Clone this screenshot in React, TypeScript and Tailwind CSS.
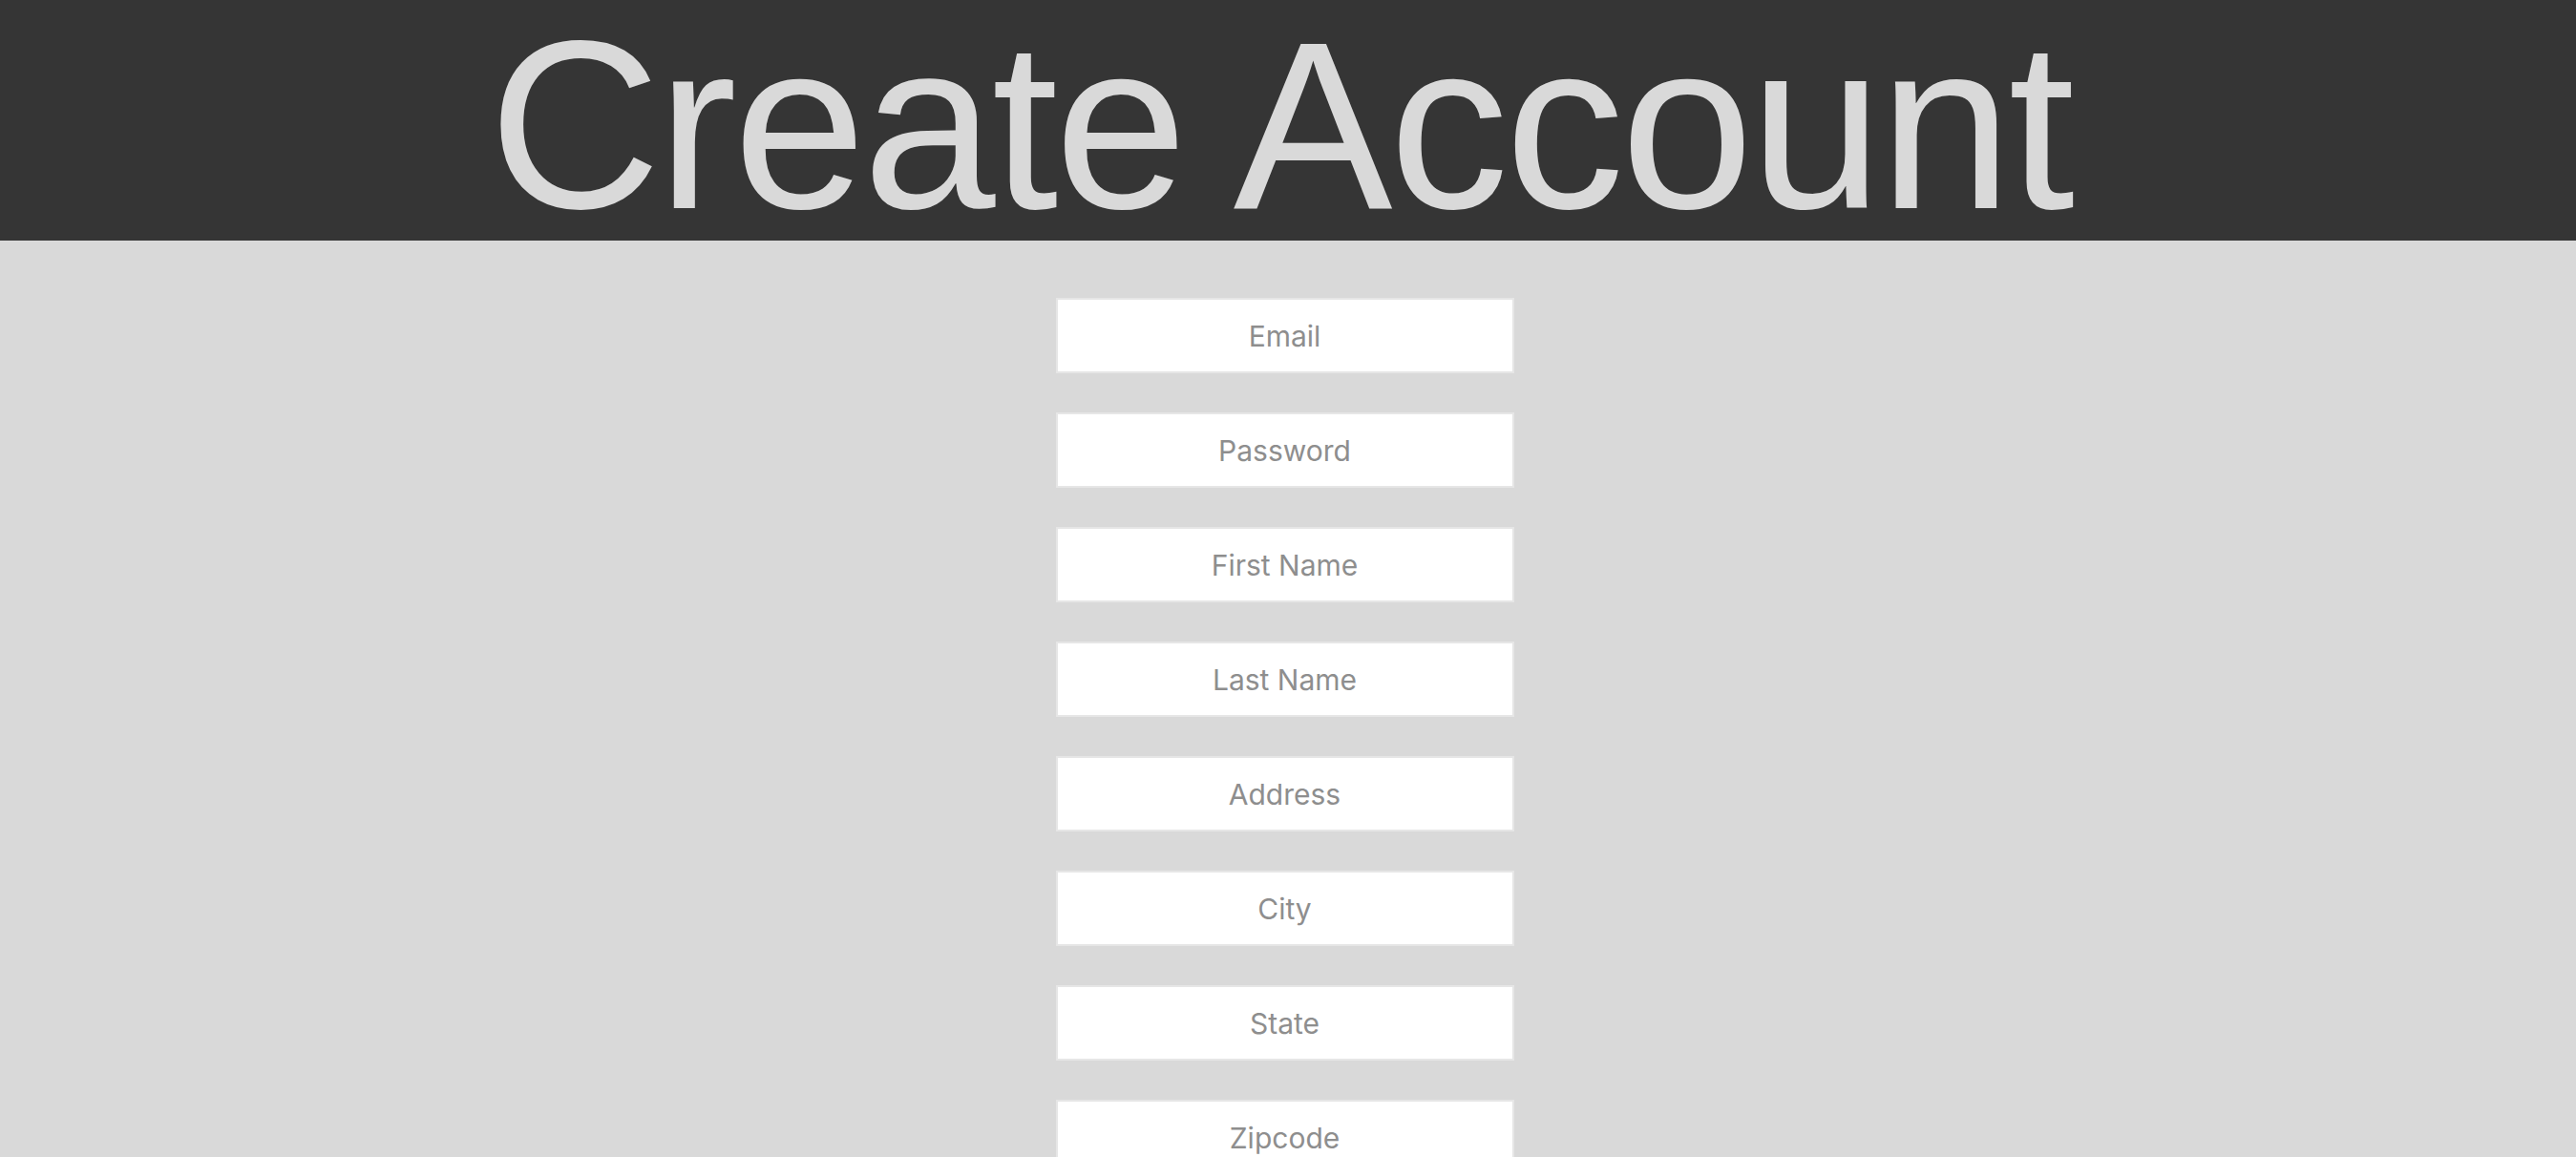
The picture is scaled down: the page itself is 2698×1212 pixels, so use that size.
const fields = [
  "Email",
  "Password",
  "First Name",
  "Last Name",
  "Address",
  "City",
  "State",
  "Zipcode",
];

export default function App() {
  return (
    <div className="min-h-screen bg-[#d9d9d9] pr-[7px] font-['Liberation_Sans',Arial,sans-serif]">
      <header className="h-[252px] bg-[#353535] pt-[12px] -mr-[7px] pr-[17px]">
        <h1 className="text-center text-[250px] leading-[240px] tracking-[-3.7px] text-[#d9d9d9] font-normal">
          Create Account
        </h1>
      </header>

      <form className="flex flex-col items-center gap-[41px] pt-[60px] pb-10">
        {fields.map((f) => (
          <input
            key={f}
            type={f === "Password" ? "password" : "text"}
            placeholder={f}
            className="w-[480px] h-[79px] bg-white border-2 border-[#e6e6e6] text-center text-[30px] font-['Inter',sans-serif] text-[#555] placeholder:text-[#8e8e8e] outline-none"
          />
        ))}
      </form>
    </div>
  );
}
